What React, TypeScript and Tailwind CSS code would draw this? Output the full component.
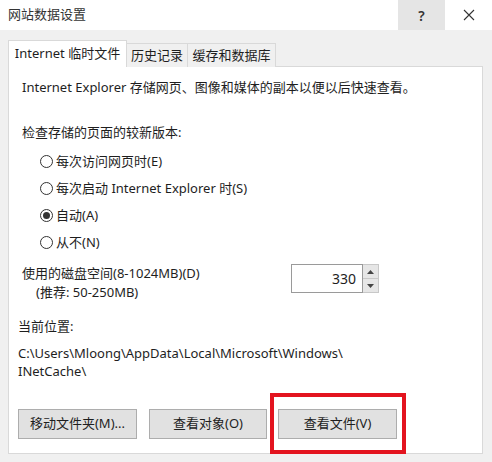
import React from 'react';

const font = { fontFamily: '"Noto Sans", "Noto Sans CJK SC", sans-serif' };

function Radio({ label, checked }: { label: string; checked?: boolean }) {
    return (
        <div className="flex h-[27px] items-center pl-[31px]">
            <span className="flex h-[13px] w-[13px] items-center justify-center rounded-full border border-[#333] bg-white">
                {checked && <span className="h-[7px] w-[7px] rounded-full bg-[#333]" />}
            </span>
            <span className="ml-[3px]">{label}</span>
        </div>
    );
}

function Btn({ label, w }: { label: string; w: string }) {
    return (
        <div className={`flex h-[30px] ${w} items-center justify-center border border-[#adadad] bg-[#e1e1e1]`}>
            {label}
        </div>
    );
}

export default function App() {
    return (
        <div className="relative flex h-[462px] w-[492px] flex-col bg-[#f0f0f0] text-[13px] text-[#1e1e1e]" style={font}>
            {/* Title bar */}
            <div className="flex h-[30px] items-center bg-white">
                <span className="pl-[8px] text-[#333]">网站数据设置</span>
                <div className="flex-1" />
                <div className="flex h-full w-[47px] items-center justify-center bg-[#e5e5e5] text-[14px] font-semibold text-[#333]">?</div>
                <div className="flex h-full w-[47px] items-center justify-center text-[#333]">
                    <svg width="12" height="12" viewBox="0 0 12 12">
                        <path d="M1 1L11 11M11 1L1 11" stroke="#333" strokeWidth="1.1" />
                    </svg>
                </div>
            </div>

            <div className="flex flex-1 flex-col px-[8px] pt-[10px]">
                {/* Tabs */}
                <div className="relative z-10 flex h-[27px] items-end">
                    <div className="flex h-[27px] w-[119px] items-center justify-center border border-b-0 border-[#d9d9d9] bg-white pb-[1px]">
                        Internet 临时文件
                    </div>
                    <div className="flex h-[24px] w-[61px] items-center justify-center border border-l-0 border-b-0 border-[#d9d9d9] bg-[#f0f0f0]">
                        历史记录
                    </div>
                    <div className="flex h-[24px] w-[88px] items-center justify-center border border-l-0 border-b-0 border-[#d9d9d9] bg-[#f0f0f0]">
                        缓存和数据库
                    </div>
                </div>

                {/* Panel */}
                <div className="-mt-px flex h-[388px] w-[475px] flex-col border border-[#d9d9d9] bg-white">
                    <div className="mt-[12px] flex h-[18px] items-center pl-[13px]">
                        Internet Explorer 存储网页、图像和媒体的副本以便以后快速查看。
                    </div>
                    <div className="mt-[27px] flex h-[18px] items-center pl-[13px]">检查存储的页面的较新版本:</div>
                    <div className="mt-[6px] flex flex-col">
                        <Radio label="每次访问网页时(E)" />
                        <Radio label="每次启动 Internet Explorer 时(S)" />
                        <Radio label="自动(A)" checked />
                        <Radio label="从不(N)" />
                    </div>

                    <div className="mt-[8px] flex pl-[13px]">
                        <div className="flex w-[269px] flex-col leading-[19px]">
                            <span>使用的磁盘空间(8-1024MB)(D)</span>
                            <span className="pl-[14px]">(推荐: 50-250MB)</span>
                        </div>
                        <div className="flex h-[29px]">
                            <div className="flex h-full w-[72px] items-center justify-end border border-[#9a9a9a] bg-white pr-[6px] text-[14px]">
                                330
                            </div>
                            <div className="flex h-full w-[16px] flex-col border border-l-0 border-[#c8c8c8] bg-[#e6e6e6]">
                                <div className="flex flex-1 items-center justify-center border-b border-[#c8c8c8]">
                                    <svg width="7" height="4" viewBox="0 0 7 4"><path d="M0 4L3.5 0L7 4Z" fill="#444" /></svg>
                                </div>
                                <div className="flex flex-1 items-center justify-center">
                                    <svg width="7" height="4" viewBox="0 0 7 4"><path d="M0 0L3.5 4L7 0Z" fill="#444" /></svg>
                                </div>
                            </div>
                        </div>
                    </div>

                    <div className="mt-[16px] flex h-[18px] items-center pl-[9px]">当前位置:</div>
                    <div className="mt-[8px] flex flex-col pl-[9px] leading-[18px]">
                        <span>C:\Users\Mloong\AppData\Local\Microsoft\Windows\</span>
                        <span>INetCache\</span>
                    </div>

                    <div className="mt-[29px] flex pl-[9px]">
                        <Btn label="移动文件夹(M)..." w="w-[119px]" />
                        <div className="ml-[12px]">
                            <Btn label="查看对象(O)" w="w-[118px]" />
                        </div>
                        <div className="ml-[11px]">
                            <Btn label="查看文件(V)" w="w-[119px]" />
                        </div>
                    </div>
                </div>
            </div>

            {/* Red highlight */}
            <div className="absolute left-[270px] top-[393px] h-[61px] w-[136px] border-[4px] border-[#e3141f]" />
        </div>
    );
}
